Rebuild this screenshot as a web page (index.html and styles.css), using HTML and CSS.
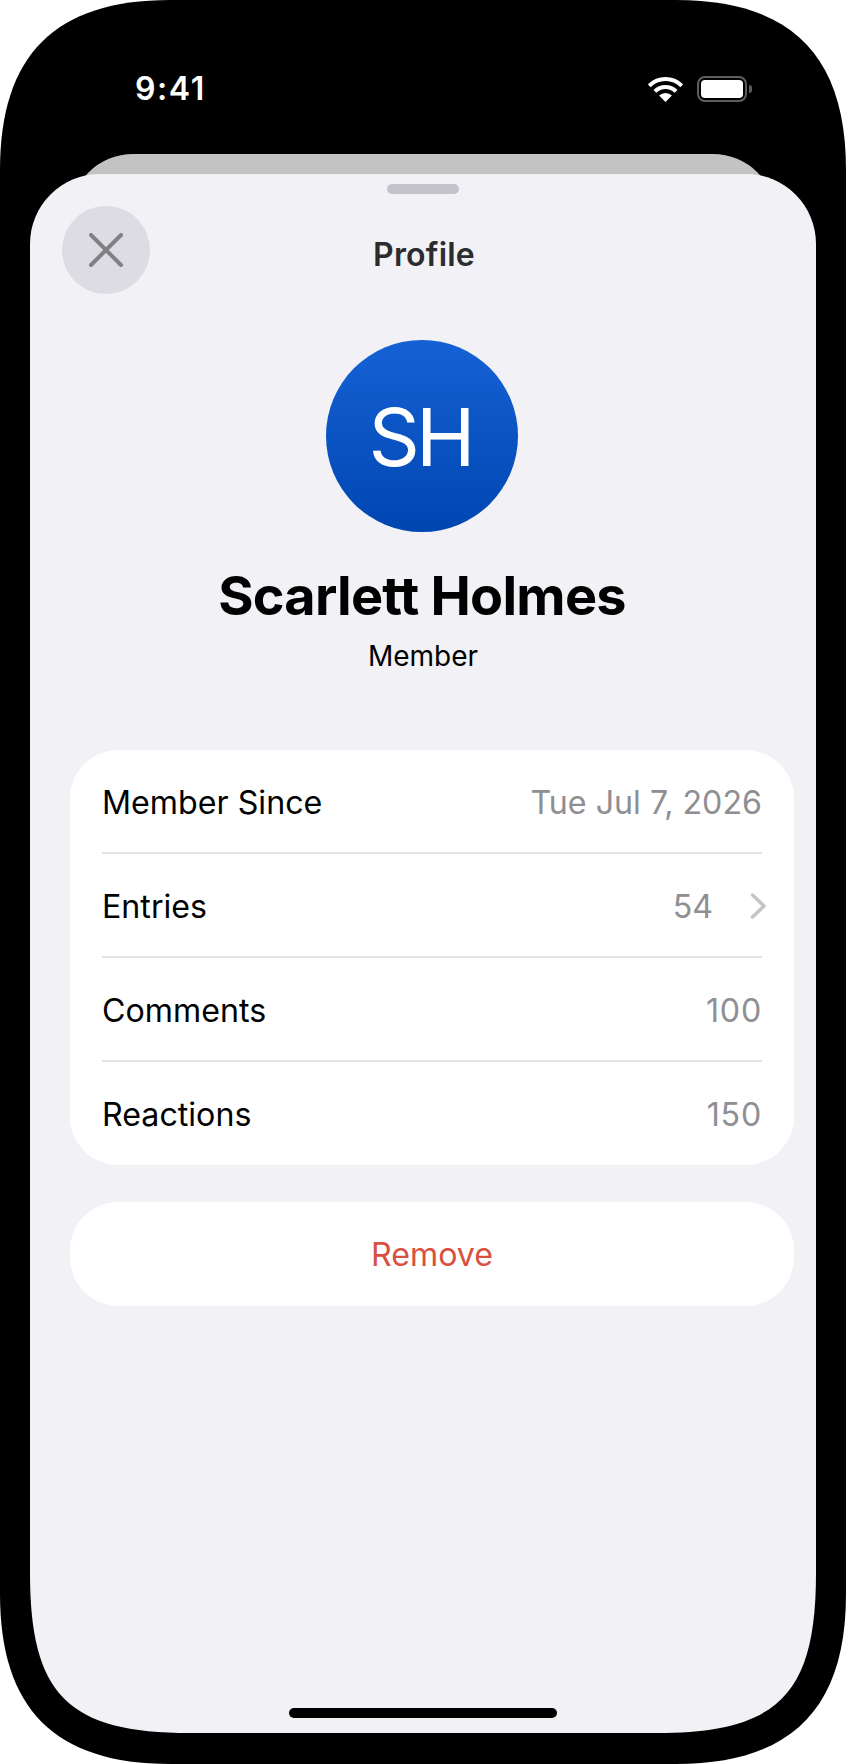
FILE: index.html
```html
<!DOCTYPE html>
<html lang="en">
<head>
<meta charset="utf-8">
<title>Profile</title>
<link rel="stylesheet" href="styles.css">
</head>
<body>
<div class="phone">
  <div class="status">
    <span class="time">9:41</span>
    <div class="status-icons">
      <svg class="wifi" viewBox="0 0 35 25" aria-hidden="true">
        <path class="wifi-arc" d="M1.24 8.74A23 23 0 0 1 33.76 8.74"/>
        <path class="wifi-arc" d="M6.9 14.4A15 15 0 0 1 28.1 14.4"/>
        <path class="wifi-dot" d="M17.5 25L11.1 18.6A9 9 0 0 1 23.9 18.6Z"/>
      </svg>
      <div class="battery"><div class="battery-fill"></div></div>
      <div class="battery-nub"></div>
    </div>
  </div>
  <div class="back-card"></div>
  <main class="sheet">
    <div class="handle"></div>
    <header class="topbar">
      <button class="close" aria-label="Close">
        <svg class="close-icon" viewBox="0 0 34 34" aria-hidden="true"><path d="M2 2L32 32M32 2L2 32"/></svg>
      </button>
      <h1 class="title">Profile</h1>
    </header>
    <section class="identity">
      <div class="avatar">SH</div>
      <h2 class="name">Scarlett Holmes</h2>
      <p class="role">Member</p>
    </section>
    <section class="card stats">
      <div class="row"><span>Member Since</span><span class="value">Tue Jul 7, 2026</span></div>
      <div class="row"><span>Entries</span><span class="value">54<svg class="chevron" viewBox="0 0 16 26" aria-hidden="true"><path d="M2.5 2L14 13L2.5 24"/></svg></span></div>
      <div class="row"><span>Comments</span><span class="value count">100</span></div>
      <div class="row"><span>Reactions</span><span class="value count">150</span></div>
    </section>
    <button class="card remove">Remove</button>
    <div class="home-bar"></div>
  </main>
</div>
</body>
</html>
```

FILE: styles.css
```css
* { box-sizing: border-box; }
html, body { margin: 0; padding: 0; background: #fff; }
body { font-family: Inter, "Liberation Sans", sans-serif; font-variant-ligatures: none; font-feature-settings: "calt" 0; }
h1, h2, p { margin: 0; font-weight: inherit; }
button { font: inherit; border: 0; padding: 0; }

.phone {
  position: relative;
  width: 846px;
  height: 1764px;
  background: #000;
  clip-path: path("M0 170C0 55 55 0 170 0H676C791 0 846 55 846 170V1594C846 1709 791 1764 676 1764H170C55 1764 0 1709 0 1594Z");
  display: flex;
  flex-direction: column;
  overflow: hidden;
}

.status {
  height: 174px;
  flex: none;
  display: flex;
  align-items: flex-start;
  justify-content: space-between;
  padding: 69px 94px 0 135px;
  color: #fff;
}
.time { font-size: 32px; line-height: 39px; font-weight: 600; letter-spacing: 1.6px; }
.status-icons { display: flex; align-items: center; margin-top: 7px; }
.wifi { width: 35px; height: 25px; margin-right: 14px; }
.wifi-arc { fill: none; stroke: #fff; stroke-width: 4; }
.wifi-dot { fill: #fff; }
.battery {
  width: 50px;
  height: 26px;
  border: 2px solid #5d5d5f;
  border-radius: 8px;
  padding: 2px;
}
.battery-fill { width: 100%; height: 100%; background: #fff; border-radius: 4px; }
.battery-nub { width: 3px; height: 8px; margin-left: 2px; background: #5d5d5f; border-radius: 0 3px 3px 0; }

.back-card {
  position: absolute;
  left: 70px;
  top: 154px;
  width: 706px;
  height: 120px;
  background: #c3c3c3;
  border-radius: 63px 63px 0 0;
}

.sheet {
  position: relative;
  flex: none;
  width: 786px;
  height: 1559px;
  margin-left: 30px;
  background: #f1f1f6;
  clip-path: path("M0 70A70 70 0 0 1 70 0H716A70 70 0 0 1 786 70V1399C786 1521 748 1559 626 1559H160C38 1559 0 1521 0 1399Z");
  display: flex;
  flex-direction: column;
  align-items: center;
}
.handle { width: 72px; height: 10px; margin-top: 10px; border-radius: 5px; background: #c3c3c9; flex: none; }

.topbar {
  align-self: stretch;
  display: grid;
  grid-template-columns: 88px 1fr 88px;
  align-items: center;
  padding: 0 32px;
  margin-top: 12px;
}
.close {
  width: 88px;
  height: 88px;
  border-radius: 50%;
  background: #dcdce2;
  display: flex;
  align-items: center;
  justify-content: center;
}
.close-icon { width: 34px; height: 34px; }
.close-icon path { fill: none; stroke: #808085; stroke-width: 4; stroke-linecap: round; }
.title { text-align: center; font-size: 32px; line-height: 36px; font-weight: 600; color: #2c2c2e; padding: 10px 0 0 2px; letter-spacing: 0.2px; }

.identity { display: flex; flex-direction: column; align-items: center; margin-top: 46px; }
.avatar {
  width: 192px;
  height: 192px;
  margin-right: 2px;
  padding-right: 4px;
  border-radius: 50%;
  background: linear-gradient(180deg, #1561d5, #0046b1);
  color: #fff;
  font-size: 80px;
  font-weight: 400;
  letter-spacing: -4px;
  display: flex;
  align-items: center;
  justify-content: center;
}
.name { margin-top: 32px; margin-right: 2px; font-size: 54px; line-height: 64px; font-weight: 700; color: #000; letter-spacing: -0.75px; }
.role { margin-top: 11px; font-size: 28px; line-height: 34px; color: #000; }

.card {
  width: 724px;
  margin-left: 40px;
  margin-right: 22px;
  background: #fff;
  border-radius: 48px;
  flex: none;
}
.stats {
  margin-top: 77px;
  height: 415px;
  padding: 0 32px;
  display: grid;
  grid-template-rows: 104px 104px 104px 103px;
}
.row {
  display: flex;
  align-items: center;
  justify-content: space-between;
  padding-top: 2px;
  font-size: 32.2px;
  color: #000;
  border-bottom: 2px solid #e3e3e6;
}
.row:last-child { border-bottom: 0; }
.value { color: #8e8e93; display: flex; align-items: center; }
.count { letter-spacing: 0.8px; }
.chevron { width: 16px; height: 26px; margin-left: 37px; margin-right: -4px; }
.chevron path { fill: none; stroke: #c4c4c7; stroke-width: 3.5; stroke-linecap: round; stroke-linejoin: round; }

.remove {
  display: block;
  margin-top: 37px;
  height: 104px;
  font-size: 32.2px;
  color: #d9503f;
  text-align: center;
}

.home-bar { width: 268px; height: 10px; margin-top: auto; margin-bottom: 15px; border-radius: 5px; background: #000; flex: none; }
```
